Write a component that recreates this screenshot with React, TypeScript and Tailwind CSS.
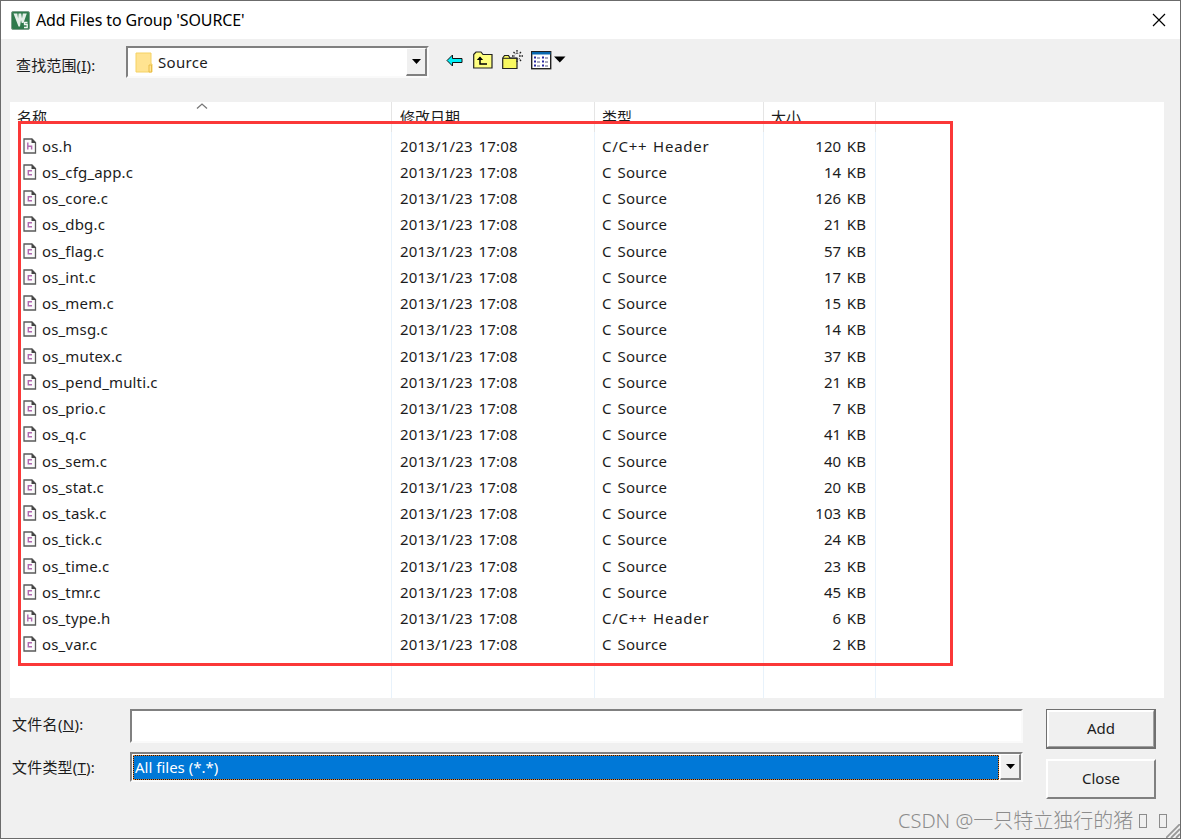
import type { ReactNode } from 'react';

type FileRow = { name: string; size: string };

const files: FileRow[] = [
  { name: 'os.h', size: '120 KB' },
  { name: 'os_cfg_app.c', size: '14 KB' },
  { name: 'os_core.c', size: '126 KB' },
  { name: 'os_dbg.c', size: '21 KB' },
  { name: 'os_flag.c', size: '57 KB' },
  { name: 'os_int.c', size: '17 KB' },
  { name: 'os_mem.c', size: '15 KB' },
  { name: 'os_msg.c', size: '14 KB' },
  { name: 'os_mutex.c', size: '37 KB' },
  { name: 'os_pend_multi.c', size: '21 KB' },
  { name: 'os_prio.c', size: '7 KB' },
  { name: 'os_q.c', size: '41 KB' },
  { name: 'os_sem.c', size: '40 KB' },
  { name: 'os_stat.c', size: '20 KB' },
  { name: 'os_task.c', size: '103 KB' },
  { name: 'os_tick.c', size: '24 KB' },
  { name: 'os_time.c', size: '23 KB' },
  { name: 'os_tmr.c', size: '45 KB' },
  { name: 'os_type.h', size: '6 KB' },
  { name: 'os_var.c', size: '2 KB' },
];

function AppIcon() {
  return (
    <svg width="19" height="19" viewBox="0 0 19 19">
      <rect x="0.5" y="0.5" width="18" height="18" rx="1.5" fill="#2f7a4c" stroke="#7c9f8a" />
      <path d="M2.500 2.500h3.800l.8 5 .5-5h2.600l.8 5 .8-5h4L12.500 12h-1.800L10 9l-1 6.500H7.500z" fill="#e4efe8" />
      <path d="M16.500 11.500h-3v2h2.700v3H13" fill="none" stroke="#f2f8f4" strokeWidth="1.300" />
    </svg>
  );
}

function FileIcon({ header }: { header: boolean }) {
  return (
    <svg width="14" height="16" viewBox="0 0 14 16" className="shrink-0">
      <path d="M1 1h8l3.500 3.500V15H1z" fill="#fafafa" stroke="#5a5a5a" strokeWidth="1.300" />
      <path d="M8.500 0.500L13 5H8.500z" fill="#444" />
      {header ? (
        <path d="M4.800 4.500v7M4.800 8.200h3.800v3.300" fill="none" stroke="#b068b0" strokeWidth="1.400" />
      ) : (
        <path d="M9 6.700H5.300v4H9" fill="none" stroke="#b068b0" strokeWidth="1.400" />
      )}
    </svg>
  );
}

function DownArrow() {
  return (
    <svg width="9" height="5" viewBox="0 0 9 5">
      <path d="M0 0h9L4.500 5z" fill="#000" />
    </svg>
  );
}

function ArrowButton({ className }: { className: string }) {
  return (
    <div className={`flex items-center justify-center border-t border-l border-r-2 border-b-2 border-t-white border-l-white border-r-[#808080] border-b-[#808080] bg-[#f0f0f0] ${className}`}>
      <DownArrow />
    </div>
  );
}

function Toolbar() {
  return (
    <div className="mt-[11px] ml-[17px] flex h-[22px] items-start">
      <svg width="17" height="20" viewBox="0 0 17 20">
        <path d="M1 10.500L6.500 5v3.500H16v4H6.500V16z" fill="#00f0f8" stroke="#111" />
      </svg>
      <svg width="20" height="20" viewBox="0 0 20 20" className="ml-[10px]">
        <path d="M.7 4.500L3 2h5l2 2.500h9V18H.7z" fill="#ffff80" stroke="#222" strokeWidth="1.200" />
        <path d="M7 7.500V14h7" fill="none" stroke="#000" strokeWidth="1.500" />
        <path d="M3.800 10L7 6.500 10.200 10z" fill="#000" />
      </svg>
      <svg width="22" height="20" viewBox="0 0 22 20" className="ml-[9px]">
        <path d="M.7 8L2.500 5.500h4L8 8h7v10.500H.7z" fill="#f8f860" stroke="#222" strokeWidth="1.200" />
        <path d="M1 8.300h14" stroke="#222" />
        <path d="M15 0v4M15 8v4M10 6h3M17 6h4M11.500 2l2 2M19 2l-2 2M19 11l-2-2.500" stroke="#222" strokeWidth="1.300" strokeDasharray="1.700 .8" />
      </svg>
      <svg width="21" height="20" viewBox="0 0 21 20" className="ml-[7px]">
        <rect x="0.700" y="1.700" width="19" height="17" fill="#fff" stroke="#222" strokeWidth="1.400" />
        <rect x="1" y="2" width="18.500" height="2.500" fill="#0868b0" />
        <path d="M3 7.500h2M3 11.500h2M3 15.500h2M11 7.500h2M11 11.500h2M11 15.500h2" stroke="#2a2aa0" strokeWidth="2" />
        <path d="M6 8h3M6 12h3M6 16h3M14 8h3M14 12h3M14 16h3" stroke="#555580" />
      </svg>
      <svg width="12" height="20" viewBox="0 0 12 20" className="ml-[2px]">
        <path d="M0 6.500h11.500L5.800 12.500z" fill="#000" />
      </svg>
    </div>
  );
}

function HeaderCell({ children, className }: { children?: ReactNode; className: string }) {
  return (
    <div className={`h-[30px] border-r border-[#e5e5e5] ${className}`}>
      <div className="h-[22px] overflow-hidden pt-[4px] text-[15px] leading-[22px]">{children}</div>
    </div>
  );
}

function FileList() {
  return (
    <div className="relative ml-[9px] h-[596px] w-[1154px] bg-white">
      <div className="absolute inset-0 grid grid-cols-[382px_203px_169px_112px_1fr]">
        {[0, 1, 2, 3].map((i) => (
          <div key={i} className="border-r border-[#e8f2fb]" />
        ))}
      </div>
      <div className="relative grid grid-cols-[382px_203px_169px_112px_1fr]">
        <HeaderCell className="pl-[7px]">名称</HeaderCell>
        <HeaderCell className="pl-[8px]">修改日期</HeaderCell>
        <HeaderCell className="pl-[7px]">类型</HeaderCell>
        <HeaderCell className="pl-[7px]">大小</HeaderCell>
      </div>
      <svg width="12" height="7" viewBox="0 0 12 7" className="absolute top-[1px] left-[186px]">
        <path d="M1 5.500L6 1l5 4.500" fill="none" stroke="#777" strokeWidth="1.300" />
      </svg>
      <div className="relative pt-[0.400px]">
        {files.map((f) => {
          const header = f.name.endsWith('.h');
          return (
            <div key={f.name} className="grid h-[26.260px] grid-cols-[382px_203px_169px_112px_1fr] items-center text-[15px] leading-[26px]">
              <div className="flex items-center pl-[13px]">
                <FileIcon header={header} />
                <span className="ml-[5px] tracking-[0.150px]">{f.name}</span>
              </div>
              <div className="pl-[8px] tracking-[0.180px] [word-spacing:1.500px]">2013/1/23 17:08</div>
              {header ? (
                <div className="pl-[7px] tracking-[0.750px] [word-spacing:1px]">C/C++ Header</div>
              ) : (
                <div className="pl-[7px] tracking-[0.280px] [word-spacing:1.500px]">C Source</div>
              )}
              <div className="pr-[10px] text-right tracking-[0.100px] [word-spacing:1.500px]">{f.size}</div>
            </div>
          );
        })}
      </div>
      <div className="absolute top-[19px] left-[8px] h-[545px] w-[935px] border-3 border-[#fb3838]" />
    </div>
  );
}

export default function App() {
  return (
    <div className="relative flex h-[839px] w-[1181px] flex-col overflow-hidden border border-[#6b6b6b] bg-[#f0f0f0] font-['Noto_Sans','Noto_Sans_CJK_SC',sans-serif] text-[15px] text-[#1c1c1c]">
      <div className="flex h-[38px] shrink-0 items-center bg-white pl-[10px] text-black">
        <AppIcon />
        <span className="-mt-px ml-[6px] text-[16px] tracking-[-0.120px]">Add Files to Group 'SOURCE'</span>
        <svg width="14" height="14" viewBox="0 0 14 14" className="mr-[14px] ml-auto">
          <path d="M1 1l12 12M13 1L1 13" stroke="#000" strokeWidth="1.200" />
        </svg>
      </div>
      <div className="flex h-[63px] shrink-0 items-start">
        <div className="mt-[15px] ml-[15px] w-[110px] leading-[22px] tracking-[0.150px]">查找范围(<u>I</u>):</div>
        <div className="mt-[7px] flex h-[32px] w-[303px] border-2 border-t-[#808080] border-r-[#fafafa] border-b-[#fafafa] border-l-[#808080] bg-white">
          <svg width="18" height="22" viewBox="0 0 18 22" className="mt-[4px] ml-[7px]">
            <path d="M1 1h15v11h1v8H1z" fill="#ffe391" stroke="#f5d264" />
            <path d="M14 20v-7h2.500v7z" fill="#ffe391" stroke="#e9bd48" />
          </svg>
          <span className="ml-[5px] leading-[29px] tracking-[0.300px]">Source</span>
          <ArrowButton className="ml-auto h-[28px] w-[21px]" />
        </div>
        <Toolbar />
      </div>
      <FileList />
      <div className="mt-[11px] flex">
        <div className="flex flex-col pl-[11px]">
          <div className="flex">
            <label className="w-[118px] pt-[4px] leading-[22px] tracking-[0.300px]">文件名(<u>N</u>):</label>
            <div className="h-[34px] w-[893px] border-2 border-t-[#808080] border-r-[#fafafa] border-b-[#fafafa] border-l-[#808080] bg-white" />
          </div>
          <div className="mt-[9px] flex">
            <label className="w-[118px] pt-[4px] leading-[22px] tracking-[0.200px]">文件类型(<u>T</u>):</label>
            <div className="flex h-[30px] w-[893px] border-2 border-t-[#808080] border-r-[#fafafa] border-b-[#fafafa] border-l-[#808080] bg-white">
              <div className="mt-px ml-px h-[25px] flex-1 border border-dotted border-[#e08030] bg-[#101820]">
                <div className="h-full bg-[#0078d7] pl-[1px] leading-[23px] text-white">All files (*.*)</div>
              </div>
              <ArrowButton className="ml-px h-[26px] w-[21px]" />
            </div>
          </div>
        </div>
        <div className="ml-[23px] flex flex-col gap-[10px]">
          <button className="h-[40px] w-[110px] border-t border-r-2 border-b-2 border-l border-[#707070]">
            <span className="flex h-full items-center justify-center border-t-2 border-r border-b border-l-2 border-t-white border-r-[#a0a0a0] border-b-[#a0a0a0] border-l-white pb-px">Add</span>
          </button>
          <button className="h-[40px] w-[110px] border-2 border-t-white border-r-[#808080] border-b-[#808080] border-l-white pb-px">Close</button>
        </div>
      </div>
      <div className="absolute top-[805px] left-[897px] flex items-center text-[20px] leading-[30px] font-light whitespace-nowrap text-[#8c8c8c]">
        <span>CSDN @一只特立独行的猪</span>
        <i className="ml-[6px] h-[14px] w-[8px] border border-[#8c8c8c]" />
        <i className="ml-[12px] h-[14px] w-[8px] border border-[#8c8c8c]" />
      </div>
      <svg width="14" height="14" viewBox="0 0 14 14" className="absolute right-0 bottom-0">
        <path d="M0 14L14 0M5 14L14 5M10 14l4-4" stroke="#999" strokeWidth="1.800" />
      </svg>
    </div>
  );
}
